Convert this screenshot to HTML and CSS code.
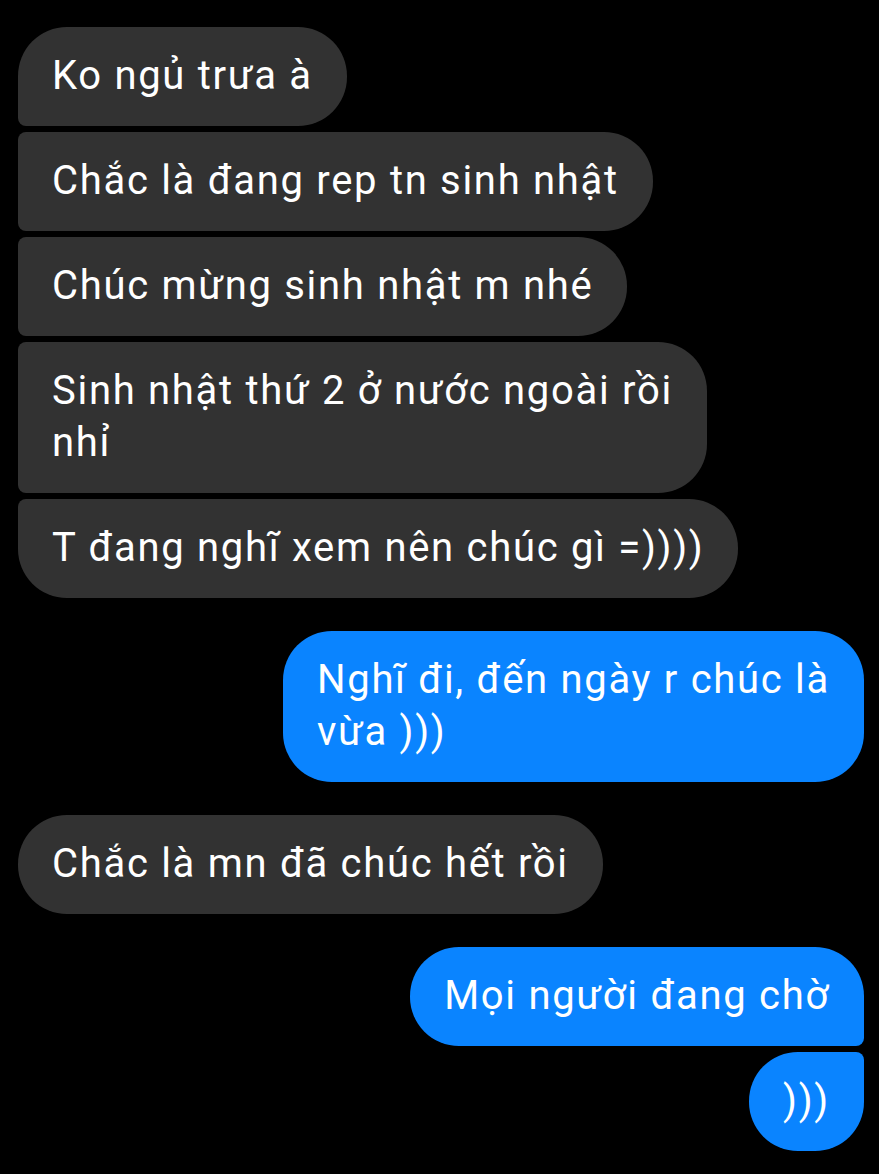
FILE: index.html
```html
<!DOCTYPE html>
<html lang="vi">
<head>
<meta charset="utf-8">
<link rel="stylesheet" href="styles.css">
</head>
<body>
<main class="thread">
  <div class="group group-in">
    <div class="bubble in first">Ko ngủ trưa à</div>
    <div class="bubble in mid">Chắc là đang rep tn sinh nhật</div>
    <div class="bubble in mid">Chúc mừng sinh nhật m nhé</div>
    <div class="bubble in mid">Sinh nhật thứ 2 ở nước ngoài rồi<br>nhỉ</div>
    <div class="bubble in last">T đang nghĩ xem nên chúc gì =))))</div>
  </div>
  <div class="group group-out">
    <div class="bubble out single">Nghĩ đi, đến ngày r chúc là<br>vừa )))</div>
  </div>
  <div class="group group-in">
    <div class="bubble in single">Chắc là mn đã chúc hết rồi</div>
  </div>
  <div class="group group-out">
    <div class="bubble out first">Mọi người đang chờ</div>
    <div class="bubble out last">)))</div>
  </div>
</main>
</body>
</html>
```

FILE: styles.css
```css
html, body {
  margin: 0;
  padding: 0;
  background: #000;
}

.thread {
  display: flex;
  flex-direction: column;
  gap: 33px;
  padding: 27px 15px 0 18px;
  font-family: Roboto, "Noto Sans", sans-serif;
  font-size: 40px;
  letter-spacing: 1.7px;
  line-height: 52px;
  color: #fff;
}

.group {
  display: flex;
  flex-direction: column;
  gap: 6px;
}

.group-in {
  align-items: flex-start;
}

.group-out {
  align-items: flex-end;
}

.bubble {
  box-sizing: border-box;
  padding: 23px 34px 24px 34px;
  border-radius: 49px;
  white-space: nowrap;
}

.in {
  background: #323232;
}

.out {
  background: #0a84ff;
}

.in.first {
  border-bottom-left-radius: 8px;
}

.in.mid {
  border-top-left-radius: 8px;
  border-bottom-left-radius: 8px;
}

.in.last {
  border-top-left-radius: 8px;
}

.out.first {
  border-bottom-right-radius: 8px;
}

.out.last {
  border-top-right-radius: 8px;
}
```
